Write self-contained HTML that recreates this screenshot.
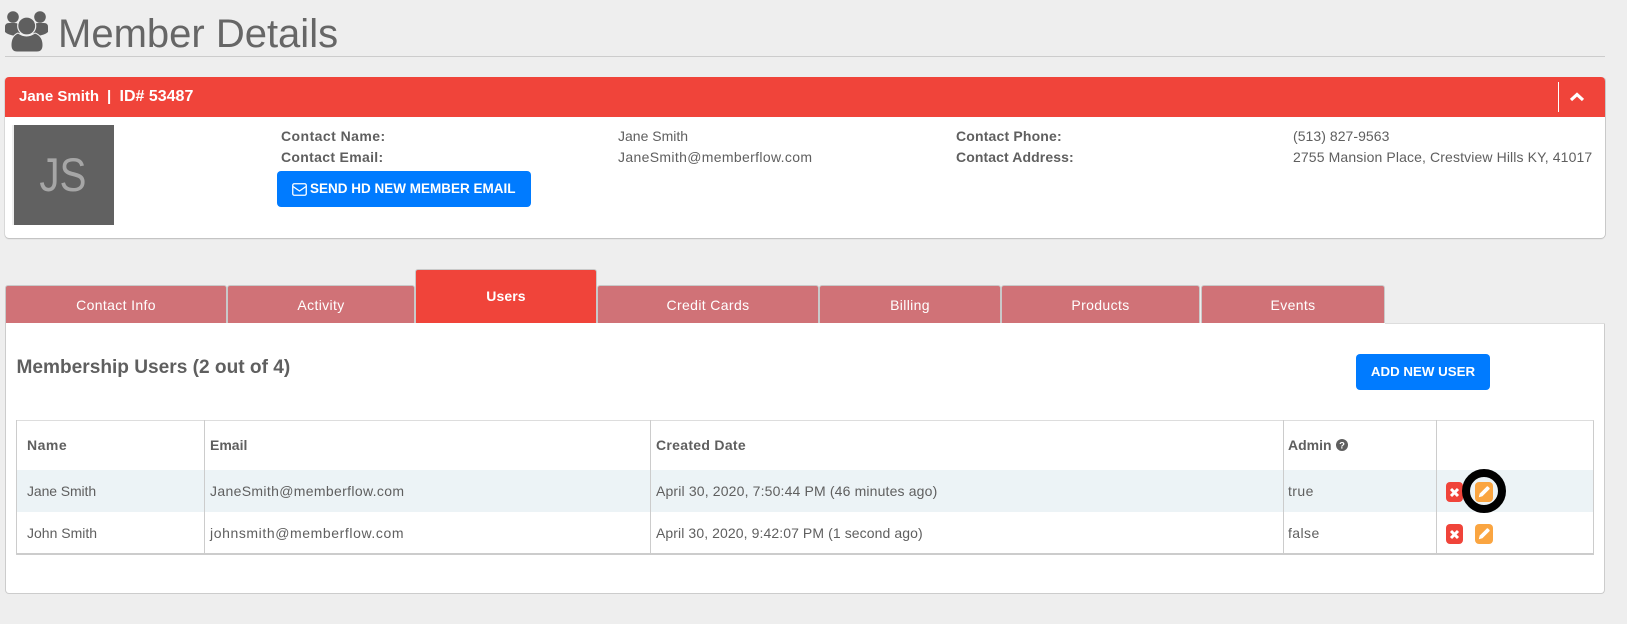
<!DOCTYPE html>
<html><head><meta charset="utf-8">
<style>
html,body{margin:0;padding:0;width:1627px;height:624px;overflow:hidden;background:#eee}
body{position:relative;font-family:"Liberation Sans",sans-serif;color:#5f5f5f;font-size:14px}
.a{position:absolute;white-space:nowrap}
.t{letter-spacing:.42px;font-size:14px;line-height:20px}
.b{font-weight:700;letter-spacing:.32px}
.tab{position:absolute;top:285px;height:38px;box-sizing:border-box;background:#d07277;border:1px solid #c9c9c9;border-bottom:0;border-radius:3px 3px 0 0;color:#fff;text-align:center;font-size:14px;line-height:38px;letter-spacing:.36px}
.vl{position:absolute;top:420px;height:134px;width:1px;background:#ccc}
.ib{position:absolute;width:18px;height:20px;border-radius:4px}
</style></head><body>
<svg class="a" style="left:0;top:0" width="56" height="56" viewBox="0 0 56 56">
<g fill="#5f5f5f"><circle cx="13" cy="17" r="5.800"/><circle cx="40" cy="17" r="5.800"/>
<path d="M5 27q0-4 4-4h6q2 0 3 1q-1 5 2 9q-2 1-4 3q-8-1-11-4z"/><path d="M48 27q0-4-4-4h-6q-2 0-3 1q1 5-2 9q2 1 4 3q8-1 11-4z"/>
<circle cx="26.700" cy="26" r="9" stroke="#eee" stroke-width="1.200"/>
<path d="M18 33q8.500 6 17 0q8 3 8 12q0 7-6 7H17q-6 0-6-7q0-9 7-12z" stroke="#eee" stroke-width="1"/></g></svg>
<div class="a" style="left:58px;top:10.500px;font-size:40px;line-height:46px;color:#666">Member Details</div>
<div class="a" style="left:5px;top:56px;width:1600px;height:1px;background:#ccc"></div>

<div class="a" style="left:5px;top:77px;width:1600px;height:161px;background:#fff;border-radius:4px;box-shadow:0 1px 1px #bbb,1px 0 0 #ccc,-1px 0 0 #ddd"></div>
<div class="a" style="left:5px;top:77px;width:1600px;height:40px;background:#f0443a;border-radius:4px 4px 0 0"></div>
<div class="a" style="left:19px;top:87px;color:#fff;font-weight:700;font-size:15px;line-height:20px">Jane Smith</div>
<div class="a" style="left:107px;top:87px;color:#fff;font-weight:700;font-size:15px;line-height:20px">|</div>
<div class="a" style="left:119.500px;top:87px;color:#fff;font-weight:700;font-size:16px;line-height:20px">ID# 53487</div>
<div class="a" style="left:1558px;top:82px;width:1px;height:30px;background:#fff"></div>
<svg class="a" style="left:1569px;top:91px" width="16" height="12" viewBox="0 0 16 12"><path d="M2 9L8 3.500L14 9" fill="none" stroke="#fff" stroke-width="3.200"/></svg>
<div class="a" style="left:12px;top:125px;width:102px;height:100px;color:#a6a6a6;font-size:47px;line-height:100px;text-align:center;background:linear-gradient(90deg,#eee 0,#eee 0)"></div>
<div class="a" style="left:14px;top:125px;width:100px;height:100px;background:#616161;color:#a6a6a6;font-size:47px;line-height:100px;text-align:center"><span style="display:inline-block;transform:translateX(-1.500px) scaleX(.86)">JS</span></div>
<div class="a t b" style="left:281px;top:126px;letter-spacing:.45px">Contact Name:</div>
<div class="a t b" style="left:281px;top:147px">Contact Email:</div>
<div class="a t" style="left:618px;top:126px;letter-spacing:0">Jane Smith</div>
<div class="a t" style="left:618px;top:147px;letter-spacing:.34px">JaneSmith@memberflow.com</div>
<div class="a t b" style="left:956px;top:126px;letter-spacing:.17px">Contact Phone:</div>
<div class="a t b" style="left:956px;top:147px;letter-spacing:.1px">Contact Address:</div>
<div class="a t" style="left:1293px;top:126px;letter-spacing:.05px">(513) 827-9563</div>
<div class="a t" style="left:1293px;top:147px;letter-spacing:.12px">2755 Mansion Place, Crestview Hills KY, 41017</div>
<div class="a" style="left:277px;top:171px;width:254px;height:36px;background:#007bff;border-radius:4px"></div>
<svg class="a" style="left:292px;top:183px" width="15" height="13" viewBox="0 0 15 13"><rect x=".75" y=".75" width="13.500" height="11.500" rx="1.500" fill="none" stroke="#fff" stroke-width="1.300"/><path d="M1 3.500L7.500 8L14 3.500" fill="none" stroke="#fff" stroke-width="1.300"/></svg>
<div class="a" style="left:310px;top:179px;color:#fff;font-weight:700;font-size:13.500px;line-height:20px">SEND HD NEW MEMBER EMAIL</div>

<div class="a" style="left:5px;top:323px;width:1600px;height:271px;background:#fff;box-sizing:border-box;border:1px solid #ccc;border-top:0;border-radius:0 0 4px 4px"></div>
<div class="a" style="left:1385px;top:323px;width:220px;height:1px;background:#ddd"></div>
<div class="tab" style="left:5px;width:222px">Contact Info</div>
<div class="tab" style="left:227px;width:188px">Activity</div>
<div class="tab" style="left:415px;top:269px;height:54px;width:182px;background:#f0443a;font-weight:700;line-height:52px;letter-spacing:.1px">Users</div>
<div class="tab" style="left:597px;width:222px">Credit Cards</div>
<div class="tab" style="left:819px;width:182px">Billing</div>
<div class="tab" style="left:1001px;width:199px">Products</div>
<div class="tab" style="left:1201px;width:184px">Events</div>

<div class="a" style="left:16.500px;top:356px;font-size:19.100px;font-weight:700;line-height:24px">Membership Users (2 out of 4)</div>
<div class="a" style="left:1356px;top:354px;width:134px;height:36px;background:#007bff;border-radius:4px;color:#fff;font-weight:700;font-size:13.300px;line-height:36px;text-align:center">ADD NEW USER</div>

<div class="a" style="left:16px;top:420px;width:1578px;height:135px;box-sizing:border-box;border:1px solid #ddd;border-bottom:2px solid #ccc;border-right-color:#ccc"></div>
<div class="a" style="left:17px;top:470px;width:1576px;height:42px;background:#ecf3f6"></div>
<div class="vl" style="left:16px"></div><div class="vl" style="left:204px"></div><div class="vl" style="left:650px"></div><div class="vl" style="left:1283px"></div><div class="vl" style="left:1436px"></div>

<div class="a t b" style="left:27px;top:435px;letter-spacing:.5px">Name</div>
<div class="a t b" style="left:210px;top:435px;letter-spacing:0">Email</div>
<div class="a t b" style="left:656px;top:435px;letter-spacing:.3px">Created Date</div>
<div class="a t b" style="left:1288px;top:435px;letter-spacing:0">Admin</div>
<svg class="a" style="left:1336px;top:439px" width="12" height="12" viewBox="0 0 12 12"><circle cx="6" cy="6" r="6" fill="#5f5f5f"/><text x="6" y="9.500" text-anchor="middle" font-size="9.500" font-weight="700" font-family="Liberation Sans" fill="#fff">?</text></svg>

<div class="a t" style="left:27px;top:481px;letter-spacing:-.1px">Jane Smith</div>
<div class="a t" style="left:210px;top:481px;letter-spacing:.34px">JaneSmith@memberflow.com</div>
<div class="a t" style="left:656px;top:481px;letter-spacing:.155px">April 30, 2020, 7:50:44 PM (46 minutes ago)</div>
<div class="a t" style="left:1288px;top:481px">true</div>
<div class="a t" style="left:27px;top:523px;letter-spacing:0">John Smith</div>
<div class="a t" style="left:210px;top:523px;letter-spacing:.59px">johnsmith@memberflow.com</div>
<div class="a t" style="left:656px;top:523px;letter-spacing:.09px">April 30, 2020, 9:42:07 PM (1 second ago)</div>
<div class="a t" style="left:1288px;top:523px">false</div>

<div class="ib" style="left:1446px;top:482px;width:17px;background:#f0443a"></div>
<div class="ib" style="left:1446px;top:524px;width:17px;background:#f0443a"></div>
<svg class="a" style="left:1449px;top:487px" width="11" height="11" viewBox="0 0 11 11"><path d="M2 2L9 9M9 2L2 9" stroke="#fff" stroke-width="3"/></svg>
<svg class="a" style="left:1449px;top:529px" width="11" height="11" viewBox="0 0 11 11"><path d="M2 2L9 9M9 2L2 9" stroke="#fff" stroke-width="3"/></svg>

<div class="a" style="left:1462px;top:469px;width:44px;height:44px;box-sizing:border-box;border:8px solid #000;border-radius:50%"></div>
<div class="ib" style="left:1475px;top:482px;background:#faa541"></div>
<div class="ib" style="left:1475px;top:524px;background:#faa541"></div>
<svg class="a" style="left:1478px;top:485px" width="13" height="13" viewBox="0 0 13 13"><path d="M.8 12.200l.9-3.600L8.700 1.600a1 1 0 0 1 1.400 0l1.300 1.300a1 1 0 0 1 0 1.400L4.400 11.300z" fill="#fff"/></svg>
<svg class="a" style="left:1478px;top:527px" width="13" height="13" viewBox="0 0 13 13"><path d="M.8 12.200l.9-3.600L8.700 1.600a1 1 0 0 1 1.400 0l1.300 1.300a1 1 0 0 1 0 1.400L4.400 11.300z" fill="#fff"/></svg>
</body></html>
